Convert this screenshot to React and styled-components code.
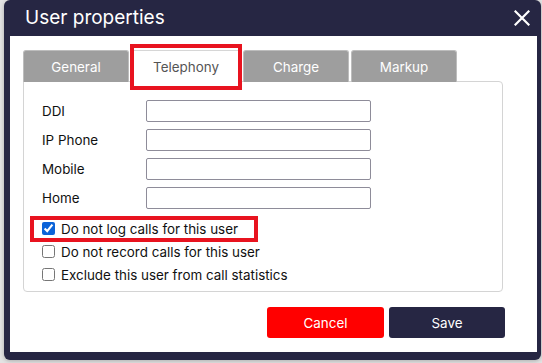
import React, { useState } from 'react'
import styled, { createGlobalStyle } from 'styled-components'

const GlobalStyle = createGlobalStyle`
  html, body {
    margin: 0;
    padding: 0;
    background: #e3e3e3;
    font-family: Inter, "Noto Sans", "Liberation Sans", sans-serif;
  }
`;

const tabs = ['General', 'Telephony', 'Charge', 'Markup'];
const fields = ['DDI', 'IP Phone', 'Mobile', 'Home'];
const options = [
  { label: 'Do not log calls for this user', checked: true, marked: true },
  { label: 'Do not record calls for this user', checked: false },
  { label: 'Exclude this user from call statistics', checked: false },
];

const App = () => {
  const [active, setActive] = useState('Telephony');
  const [checks, setChecks] = useState(options.map(o => o.checked));

  return (
    <>
      <GlobalStyle />
      <Page>
        <Dialog>
          <Header>
            <Title>User properties</Title>
            <CloseBtn aria-label="close">
              <svg width="16" height="16" viewBox="0 0 16 16">
                <path d="M1.5 1.5 L14.5 14.5 M14.5 1.5 L1.5 14.5" stroke="#fff" strokeWidth="2.2" strokeLinecap="square" />
              </svg>
            </CloseBtn>
          </Header>
          <Body>
            <TabBar>
              {tabs.map(t => (
                <Tab key={t} $active={t === active} onClick={() => setActive(t)}>
                  {t}
                  {t === 'Telephony' && <Mark $tab />}
                </Tab>
              ))}
            </TabBar>
            <Panel>
              <Fields>
                {fields.map(f => (
                  <FieldRow key={f}>
                    <Label>{f}</Label>
                    <Input type="text" />
                  </FieldRow>
                ))}
              </Fields>
              <Options>
                {options.map((o, i) => (
                  <CheckRow key={o.label}>
                    <Check
                      type="checkbox"
                      checked={checks[i]}
                      onChange={() => setChecks(checks.map((c, j) => (j === i ? !c : c)))}
                    />
                    <CheckText>{o.label}</CheckText>
                    {o.marked && <Mark />}
                  </CheckRow>
                ))}
              </Options>
            </Panel>
            <Footer>
              <Button $variant="cancel">Cancel</Button>
              <Button>Save</Button>
            </Footer>
          </Body>
        </Dialog>
      </Page>
    </>
  )
}

export default App;

const Page = styled.div`
  padding-left: 4px;
  height: 363px;
  box-sizing: border-box;
`;

const Dialog = styled.div`
  width: 537px;
  height: 360px;
  box-sizing: border-box;
  background: #262643;
  border-radius: 6px;
  padding: 0 4px 8px 6px;
  display: flex;
  flex-direction: column;
  box-shadow: 0 1px 4px rgba(0, 0, 0, 0.25);
`;

const Header = styled.div`
  height: 36px;
  display: flex;
  align-items: center;
  justify-content: space-between;
  padding: 0 7px 0 15px;
`;

const Title = styled.span`
  color: #ffffff;
  font-size: 19px;
  font-weight: 400;
  margin-top: -1px;
`;

const CloseBtn = styled.button`
  background: none;
  border: none;
  padding: 0;
  width: 16px;
  height: 16px;
  display: flex;
  cursor: pointer;
  margin-top: -1px;
`;

const Body = styled.div`
  flex: 1;
  background: #ffffff;
  padding: 14px 34px 0 13px;
  display: flex;
  flex-direction: column;
`;

const TabBar = styled.div`
  display: flex;
  gap: 2px;
  height: 32px;
  position: relative;
  z-index: 1;
`;

const Tab = styled.div`
  position: relative;
  width: ${p => (p.$active ? '110px' : '106px')};
  box-sizing: border-box;
  display: flex;
  align-items: center;
  justify-content: center;
  font-size: 13.4px;
  color: ${p => (p.$active ? '#555' : '#ffffff')};
  background: ${p => (p.$active ? '#ffffff' : '#9e9e9e')};
  border: 1px solid ${p => (p.$active ? '#d6d6d6' : '#bdbdbd')};
  border-bottom: none;
  border-radius: 3px 3px 0 0;
  height: ${p => (p.$active ? '33px' : '32px')};
  cursor: pointer;
`;

const Mark = styled.span`
  position: absolute;
  border: 4px solid #e8131f;
  pointer-events: none;
  ${p =>
    p.$tab
      ? `left: -2px; right: -2px; top: -7px; bottom: -7px;`
      : `left: -12px; top: -6px; width: 228px; height: 26px; box-sizing: border-box;`}
`;

const Panel = styled.div`
  height: 211px;
  box-sizing: border-box;
  border: 1px solid #d4d4d4;
  border-radius: 0 4px 4px 4px;
  margin-top: -1px;
  padding: 18px 19px 0 18px;
  display: flex;
  flex-direction: column;
`;

const Fields = styled.div`
  display: flex;
  flex-direction: column;
  gap: 7px;
`;

const FieldRow = styled.div`
  display: flex;
  align-items: center;
`;

const Label = styled.label`
  width: 104px;
  font-size: 13.4px;
  color: #111;
`;

const Input = styled.input`
  width: 225px;
  height: 22px;
  box-sizing: border-box;
  border: 1px solid #8e8c99;
  border-radius: 2px;
  padding: 0 4px;
  font-family: inherit;
  outline: none;
`;

const Options = styled.div`
  display: flex;
  flex-direction: column;
  gap: 10px;
  margin-top: 13px;
`;

const CheckRow = styled.label`
  position: relative;
  display: flex;
  align-items: center;
  gap: 6px;
  height: 13px;
`;

const Check = styled.input`
  width: 13px;
  height: 13px;
  margin: 0;
  accent-color: #0b63d8;
`;

const CheckText = styled.span`
  font-size: 13.4px;
  color: #111;
`;

const Footer = styled.div`
  display: flex;
  justify-content: flex-end;
  gap: 5px;
  margin-top: 15px;
  margin-right: -2px;
`;

const Button = styled.button`
  width: ${p => (p.$variant === 'cancel' ? '117px' : '116px')};
  height: 31px;
  border: none;
  border-radius: 3px;
  font-family: inherit;
  font-size: 13.4px;
  color: #ffffff;
  background: ${p => (p.$variant === 'cancel' ? '#ff0000' : '#262643')};
  cursor: pointer;
`;
